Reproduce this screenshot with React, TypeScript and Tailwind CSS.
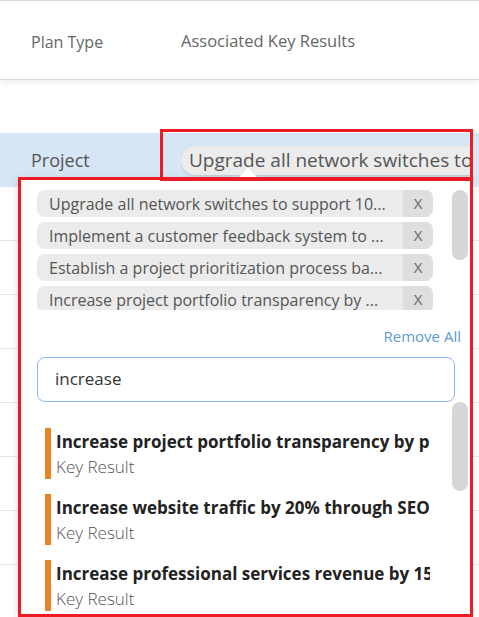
const chips = [
    "Upgrade all network switches to support 10...",
    "Implement a customer feedback system to ...",
    "Establish a project prioritization process ba...",
    "Increase project portfolio transparency by ...",
];

const results = [
    "Increase project portfolio transparency by publishing monthly reports",
    "Increase website traffic by 20% through SEO improvements",
    "Increase professional services revenue by 15%",
];

export default function App() {
    return (
        <div
            className="relative w-[479px] h-[617px] overflow-hidden bg-white text-[#555]"
            style={{ fontFamily: '"Segoe UI", "Open Sans", sans-serif' }}
        >
            {/* header */}
            <div className="h-[80px] border-t border-b border-[#d9d9d9] bg-white flex items-center pt-[3px] shadow-[0_2px_6px_rgba(0,0,0,0.08)] relative z-10">
                <div className="w-[181px] shrink-0 pl-[31px] text-[16px] text-[#666]">Plan Type</div>
                <div className="text-[16.5px] text-[#666]">Associated Key Results</div>
            </div>
            <div className="h-[53px]" />

            {/* table */}
            <div className="h-[54px] bg-[#d6e6f5] flex items-center">
                <div className="w-[181px] shrink-0 pl-[31px] text-[18px] text-[#555]">Project</div>
                <div className="w-[290px] overflow-hidden py-[3px]">
                    <div className="h-[29px] w-[360px] rounded-full bg-[#ececec] shadow-[0_1px_3px_rgba(0,0,0,0.15)] pl-[8px] flex items-center text-[19px] whitespace-nowrap">
                        Upgrade all network switches to support 100G
                    </div>
                </div>
            </div>
            {[0, 1, 2, 3, 4, 5, 6, 7].map((i) => (
                <div key={i} className="h-[54px] border-b border-[#e6e6e6]" />
            ))}

            {/* dropdown */}
            <div className="absolute left-[20px] top-[178px] w-[451px] h-[440px] bg-white border-r border-[#bdbdbd] shadow-[-2px_2px_8px_rgba(0,0,0,0.15)] z-20">
                <div className="absolute left-[218px] -top-[10px] w-0 h-0 border-l-[10px] border-r-[10px] border-b-[10px] border-l-transparent border-r-transparent border-b-white" />

                <div className="relative h-[132px] pt-[12px] pl-[17px] overflow-hidden">
                    <div className="flex flex-col gap-[5px] w-[396px]">
                        {chips.map((c) => (
                            <div key={c} className="h-[27px] rounded-[8px] bg-[#ebebeb] flex items-center overflow-hidden">
                                <div className="flex-1 pl-[12px] text-[16px] text-[#555] whitespace-nowrap">{c}</div>
                                <div className="w-[30px] h-full bg-[#dedede] flex items-center justify-center text-[15px] text-[#666]">X</div>
                            </div>
                        ))}
                    </div>
                    <div className="absolute left-[432px] top-[12px] w-[16px] h-[70px] rounded-full bg-[#d6d6d6]" />
                </div>

                <div className="flex justify-end pr-[9px] pt-[15px] text-[15px] text-[#5b9bd5]">Remove All</div>

                <div className="ml-[17px] mt-[9px] w-[418px] h-[45px] rounded-[8px] border border-[#8cb8f0] flex items-center pl-[17px] text-[17px] text-[#333]">
                    increase
                </div>

                <div className="relative">
                    <div className="absolute left-[432px] top-[0px] w-[16px] h-[89px] rounded-full bg-[#d6d6d6]" />
                    <div className="pt-[26px] pl-[25px] flex flex-col gap-[15px]">
                        {results.map((r) => (
                            <div key={r} className="h-[51px] flex">
                                <div className="w-[6px] bg-[#e88423]" />
                                <div className="pl-[5px] w-[379px] overflow-hidden pt-[1px]">
                                    <div className="text-[17px] font-bold text-[#222] whitespace-nowrap leading-[26px]">{r}</div>
                                    <div className="text-[17px] font-light text-[#555] leading-[24px]">Key Result</div>
                                </div>
                            </div>
                        ))}
                    </div>
                </div>
            </div>

            {/* annotations */}
            <div className="absolute left-[160px] top-[129px] w-[313px] h-[52px] border-[3px] border-[#ed1c24] z-30" />
            <div className="absolute left-[18px] top-[177px] w-[455px] h-[440px] border-[3px] border-[#ed1c24] z-30" />
        </div>
    );
}
